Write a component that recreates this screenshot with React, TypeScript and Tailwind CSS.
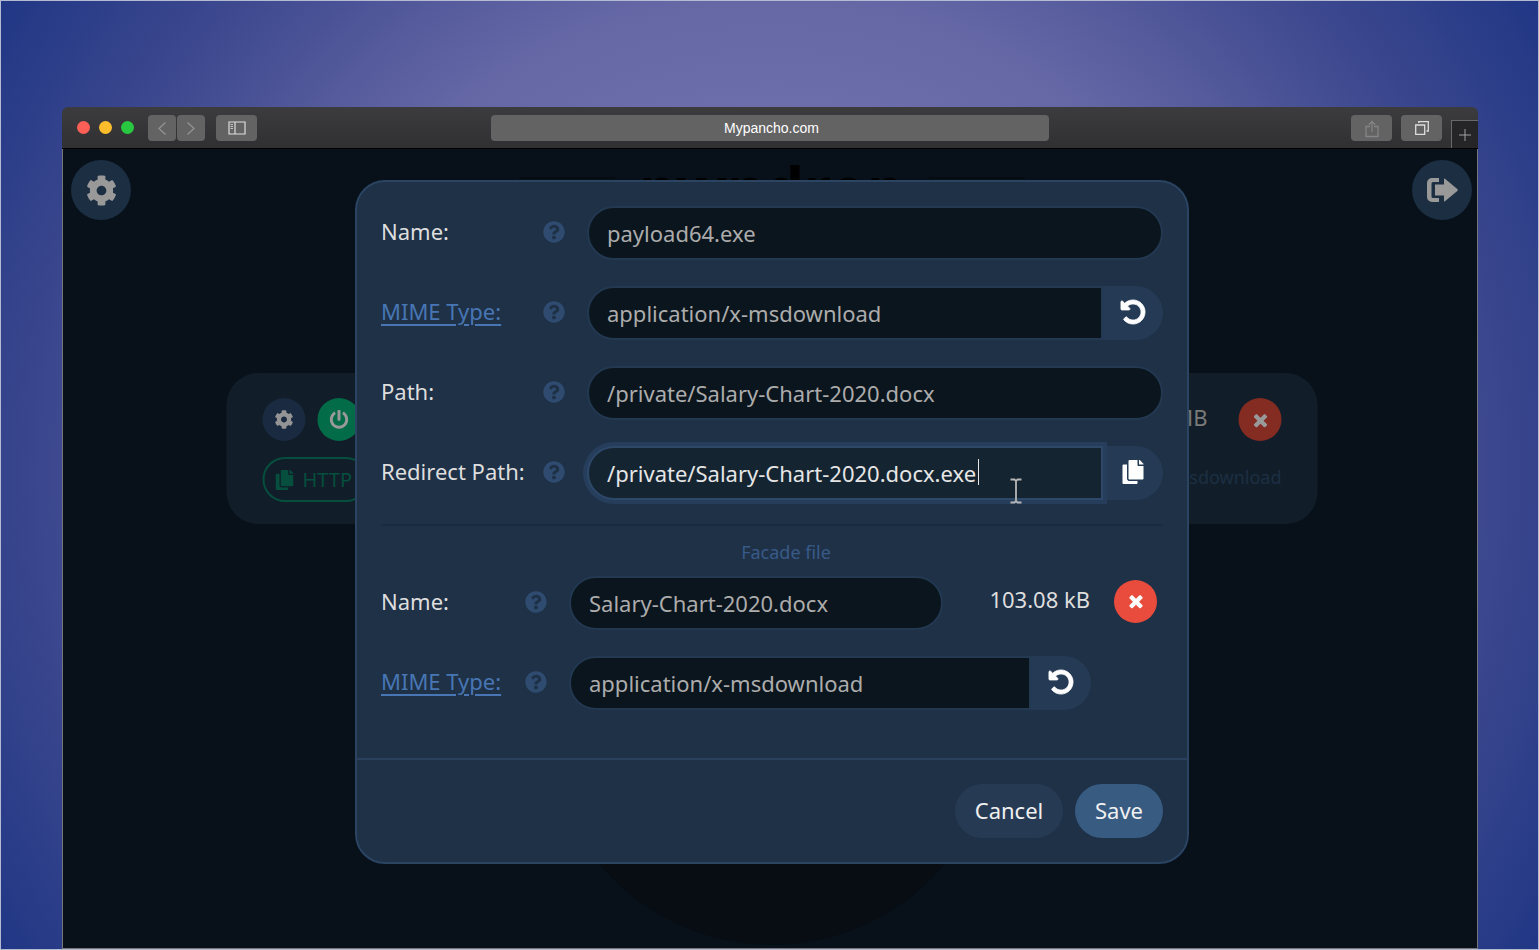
import type { InputHTMLAttributes, ReactNode } from 'react';
import { FaCog, FaCopy, FaPowerOff, FaQuestionCircle } from 'react-icons/fa';

function UndoIcon() {
  return (
    <svg viewBox="-60 -60 1656 1656" className="size-[26px]" fill="currentColor" stroke="currentColor" strokeWidth="50" aria-hidden="true">
      <path d="M1536 768q0 156-61 298t-164 245-245 164-298 61q-172 0-327-72.5t-264-204.5q-7-10-6.500-22.500t8.500-20.500l137-138q10-9 25-9 16 2 23 12 73 95 179 147t225 52q104 0 198.500-40.500t163.500-109.500 109.500-163.500 40.500-198.500-40.500-198.500-109.500-163.500-163.500-109.500-198.500-40.500q-98 0-188 35.500t-160 101.500l137 138q31 30 14 69-17 40-59 40h-448q-26 0-45-19t-19-45v-448q0-42 40-59 39-17 69 14l130 129q107-101 244.500-156.500t284.500-55.500q156 0 298 61t245 164 164 245 61 298z" />
    </svg>
  );
}

function CrossIcon() {
  return (
    <svg viewBox="0 0 1792 1792" className="size-5" fill="currentColor" aria-hidden="true">
      <path d="M1490 1322q0 40-28 68l-136 136q-28 28-68 28t-68-28l-294-294-294 294q-28 28-68 28t-68-28l-136-136q-28-28-28-68t28-68l294-294-294-294q-28-28-28-68t28-68l136-136q28-28 68-28t68 28l294 294 294-294q28-28 68-28t68 28l136 136q28 28 28 68t-28 68l-294 294 294 294q28 28 28 68z" />
    </svg>
  );
}

function LogoutIcon() {
  return (
    <svg viewBox="0 0 31 24" className="h-6 w-[31px]" fill="currentColor" aria-hidden="true">
      <path d="M12 0H5a5 5 0 0 0-5 5v14a5 5 0 0 0 5 5h7v-4H6a1.500 1.500 0 0 1-1.500-1.500v-13A1.500 1.500 0 0 1 6 4h6z" />
      <path d="M8 6.500h9V1.200q0-1.200 1-.4L30.300 11q1 1 0 2L18 23.200q-1 .8-1-.4V17.500H8z" />
    </svg>
  );
}

function BrowserBar() {
  const button = 'flex h-[26px] items-center justify-center rounded-[4px] bg-[#636364]';
  return (
    <header className="grid h-[42px] grid-cols-[1fr_minmax(0,558px)_1fr] items-center border-b border-black bg-linear-to-b from-[#3c3c3e] to-[#303032]">
      <div className="flex items-center pl-[15px]">
        <div className="flex gap-[9px]">
          <span className="size-[13px] rounded-full bg-[#ff5f57]" />
          <span className="size-[13px] rounded-full bg-[#ffbd2e]" />
          <span className="size-[13px] rounded-full bg-[#28c940]" />
        </div>
        <div className="ml-[14px] flex gap-px text-[#939394]">
          <button aria-label="Back" className={button + ' w-7'}>
            <svg viewBox="0 0 28 26" className="h-[26px] w-7" fill="none" stroke="currentColor" strokeWidth="1.300"><path d="M17.500 7.500 11 13.500l6.500 6" /></svg>
          </button>
          <button aria-label="Forward" className={button + ' w-7'}>
            <svg viewBox="0 0 28 26" className="h-[26px] w-7" fill="none" stroke="currentColor" strokeWidth="1.300"><path d="m10.500 7.500 6.500 6-6.500 6" /></svg>
          </button>
        </div>
        <button aria-label="Sidebar" className={button + ' ml-[11px] w-[41px] text-[#dddddd]'}>
          <svg viewBox="0 0 18 14" className="h-[14px] w-[18px]" fill="none" stroke="currentColor"><path strokeWidth="1.200" d="M1 1h16v12H1zM7 1v12" /><path strokeWidth=".8" d="M2.500 3.500H5M2.500 5.500H5M2.500 7.500H5" /></svg>
        </button>
      </div>
      <input aria-label="Address" defaultValue="Mypancho.com" className="h-[26px] w-full rounded-[4px] bg-[#636364] pt-px pl-[3px] text-center font-['Liberation_Sans',sans-serif] text-sm text-white outline-none" />
      <div className="flex h-full items-center justify-end">
        <button aria-label="Share" className={button + ' w-[41px] text-[#858586]'}>
          <svg viewBox="0 0 14 18" className="mt-[3px] h-[18px] w-[14px]" fill="none" stroke="currentColor" strokeWidth="1.300"><path d="M5 6.500H1v10h12v-10H9M7 12V2M3.800 4.800 7 1.500l3.200 3.300" /></svg>
        </button>
        <button aria-label="Show tabs" className={button + ' ml-[9px] w-[41px] text-[#dddddd]'}>
          <svg viewBox="0 0 16 16" className="size-4" fill="none" stroke="currentColor" strokeWidth="1.300"><path d="M1.700 5h9v9.300h-9zM4.800 3V1.700h9.500V11h-1.800" /></svg>
        </button>
        <button aria-label="New tab" className="ml-[9px] flex h-7 w-[27px] items-center justify-center self-end border-t border-l border-[#69696a] bg-[#252527] text-[#a0a0a0]">
          <svg viewBox="0 0 14 14" className="size-[14px]" fill="none" stroke="currentColor"><path d="M7 1v12M1 7h12" /></svg>
        </button>
      </div>
    </header>
  );
}

function Label({ id, children, link = false }: { id: string; children: string; link?: boolean }) {
  return (
    <div className="flex flex-1 items-center justify-between pb-[3px]">
      <label htmlFor={id} className="whitespace-nowrap">
        {link ? <a href="#mime" className="text-[#4876b4] underline decoration-2 underline-offset-4">{children}</a> : children}
      </label>
      <button type="button" aria-label={'Help for ' + children} className="text-[#2f4c70]">
        <FaQuestionCircle className="size-[22px]" />
      </button>
    </div>
  );
}

function Field({ id, addon, action, caret = false, ...rest }: { id: string; addon?: ReactNode; action?: string; caret?: boolean } & InputHTMLAttributes<HTMLInputElement>) {
  return (
    <div className="relative flex h-[54px] w-full">
      <input
        id={id}
        {...rest}
        className={
          (addon ? 'rounded-l-full ' : 'rounded-full ') +
          'relative h-full min-w-0 flex-1 border-2 border-[#233951] bg-[#0b151d] px-[18px] pb-px text-[#acacac] caret-transparent outline-none focus:border-[#2d4869] focus:bg-[#152431] focus:text-[#e6e6e6] focus:ring-4 focus:ring-[#263e5b]'
        }
      />
      {caret && <span className="absolute top-[13px] left-[391px] h-[26px] w-px bg-[#e6e6e6]" />}
      {addon && (
        <button type="button" aria-label={action} className="flex w-[60px] items-center justify-center rounded-r-full bg-[#253b55] pb-[2px] text-white">
          {addon}
        </button>
      )}
    </div>
  );
}

function Dialog() {
  return (
    <form role="dialog" aria-label="File settings" className="absolute top-[31px] left-1/2 w-[834px] -translate-x-1/2 rounded-[30px] border-2 border-[#2a4462] bg-[#1e3147] text-[#dedede]">
      <div className="px-6 pt-6 pb-12">
        <div className="flex flex-col gap-[26px]">
          <div className="flex"><div className="flex w-[184px]"><Label id="name">Name:</Label></div><div className="ml-[22px] flex-1"><Field id="name" defaultValue="payload64.exe" /></div></div>
          <div className="flex"><div className="flex w-[184px]"><Label id="mime" link>MIME Type:</Label></div><div className="ml-[22px] flex-1"><Field id="mime" defaultValue="application/x-msdownload" addon={<UndoIcon />} action="Reset MIME type" /></div></div>
          <div className="flex"><div className="flex w-[184px]"><Label id="path">Path:</Label></div><div className="ml-[22px] flex-1"><Field id="path" defaultValue="/private/Salary-Chart-2020.docx" /></div></div>
          <div className="flex"><div className="flex w-[184px]"><Label id="redirect">Redirect Path:</Label></div><div className="ml-[22px] flex-1"><Field id="redirect" autoFocus caret defaultValue="/private/Salary-Chart-2020.docx.exe" addon={<FaCopy className="size-6" />} action="Copy path" /></div></div>
        </div>
        <hr className="mt-6 border-t-2 border-[#192a3c]" />
        <h2 className="mt-3 pl-7 text-center text-lg leading-7 text-[#395a87]">Facade file</h2>
        <div className="mt-[10px] flex flex-col gap-[26px]">
          <div className="flex">
            <div className="flex w-[166px]"><Label id="facade-name">Name:</Label></div>
            <div className="ml-[22px] w-[374px]"><Field id="facade-name" defaultValue="Salary-Chart-2020.docx" /></div>
            <div className="flex flex-1 items-center justify-end gap-6 pr-[6px] pb-1">
              <span className="pb-[3px] whitespace-nowrap">103.08 kB</span>
              <button type="button" aria-label="Remove facade file" className="flex size-[43px] items-center justify-center rounded-full bg-[#e94b3c] text-white"><CrossIcon /></button>
            </div>
          </div>
          <div className="flex">
            <div className="flex w-[166px]"><Label id="facade-mime" link>MIME Type:</Label></div>
            <div className="mr-[72px] ml-[22px] flex-1"><Field id="facade-mime" defaultValue="application/x-msdownload" addon={<UndoIcon />} action="Reset facade MIME type" /></div>
          </div>
        </div>
      </div>
      <footer className="flex justify-end gap-3 border-t-2 border-[#29415e] px-6 py-6 text-[#f0f0f0]">
        <button type="button" className="h-[54px] w-[108px] rounded-full bg-[#263a54] pb-[2px]">Cancel</button>
        <button type="button" className="h-[54px] w-[88px] rounded-full bg-[#385b82] pb-[2px]">Save</button>
      </footer>
    </form>
  );
}

function FileCard() {
  return (
    <section className="absolute top-[224px] left-1/2 flex h-[151px] w-[1091px] -translate-x-1/2 justify-between rounded-[32px] bg-[#111e29] px-9 pt-[25px]">
      <div>
        <div className="flex gap-3">
          <button aria-label="File settings" className="flex size-[43px] items-center justify-center rounded-full bg-[#1a2a40] text-[#949494]"><FaCog className="size-[19px]" /></button>
          <button aria-label="Toggle file" className="flex size-[43px] items-center justify-center rounded-full bg-[#026c48] text-[#999999]"><FaPowerOff className="size-[19px]" /></button>
        </div>
        <button className="mt-4 flex h-[45px] w-[106px] items-center gap-2 rounded-full border-2 border-[#064e3d] pl-[10px] text-xl text-[#064e3d]"><FaCopy className="size-5" />HTTP</button>
      </div>
      <div className="flex flex-col items-end text-[#7a7a7a]">
        <div className="flex items-center gap-[31px]">
          <span className="pb-1">1.2 MB</span>
          <button aria-label="Delete file" className="flex size-[43px] items-center justify-center rounded-full bg-[#842b22] text-[#999999]"><CrossIcon /></button>
        </div>
        <span className="mt-[22px] text-lg leading-7 text-[#1c2f43]">application/x-msdownload</span>
      </div>
    </section>
  );
}

export default function App() {
  return (
    <main className="flex h-screen min-h-[600px] overflow-hidden border border-[#b5bad3] bg-[radial-gradient(circle_at_center,#8080b8_0px,#6668a6_475px,#3e498f_708px,#213785_900px)] pt-[106px] pr-[60px] pl-[61px] font-['Noto_Sans',sans-serif] text-[22px]">
      <div className="flex min-w-0 flex-1 flex-col overflow-hidden rounded-t-[6px]">
        <BrowserBar />
        <div className="relative flex-1 overflow-hidden border-x border-b border-[#77777b] bg-[#08111a]">
          <div className="flex justify-between py-[11px] pr-[5px] pl-2">
            <button aria-label="Settings" className="flex size-[60px] items-center justify-center rounded-full bg-[#1b2e42] text-[#999999]"><FaCog className="size-[31px]" /></button>
            <button aria-label="Log out" className="flex size-[60px] items-center justify-center rounded-full bg-[#1b2e42] text-[#999999]"><LogoutIcon /></button>
          </div>
          <div className="pointer-events-none absolute inset-0 left-1 *:pointer-events-auto">
            <div className="absolute top-[346px] left-1/2 size-[450px] -translate-x-1/2 rounded-full bg-[#070d13]" />
            <div className="mx-auto flex w-[506px] items-start gap-6">
              <span className="mt-7 h-[2px] flex-1 bg-[#050b11]" />
              <p className="text-[60px] leading-[76px] font-bold text-black">pwndrop</p>
              <span className="mt-7 h-[2px] flex-1 bg-[#050b11]" />
            </div>
            <FileCard />
            <Dialog />
          </div>
          <svg viewBox="0 0 12 26" className="absolute top-[329px] left-[947px] h-[26px] w-3" fill="none" stroke="#b6b6b6" strokeWidth="1.800" aria-hidden="true"><path d="M.5 1.500h4L6 3l1.500-1.500h4M6 3v20M.5 24.500h4L6 23l1.500 1.500h4" /></svg>
        </div>
      </div>
    </main>
  );
}
